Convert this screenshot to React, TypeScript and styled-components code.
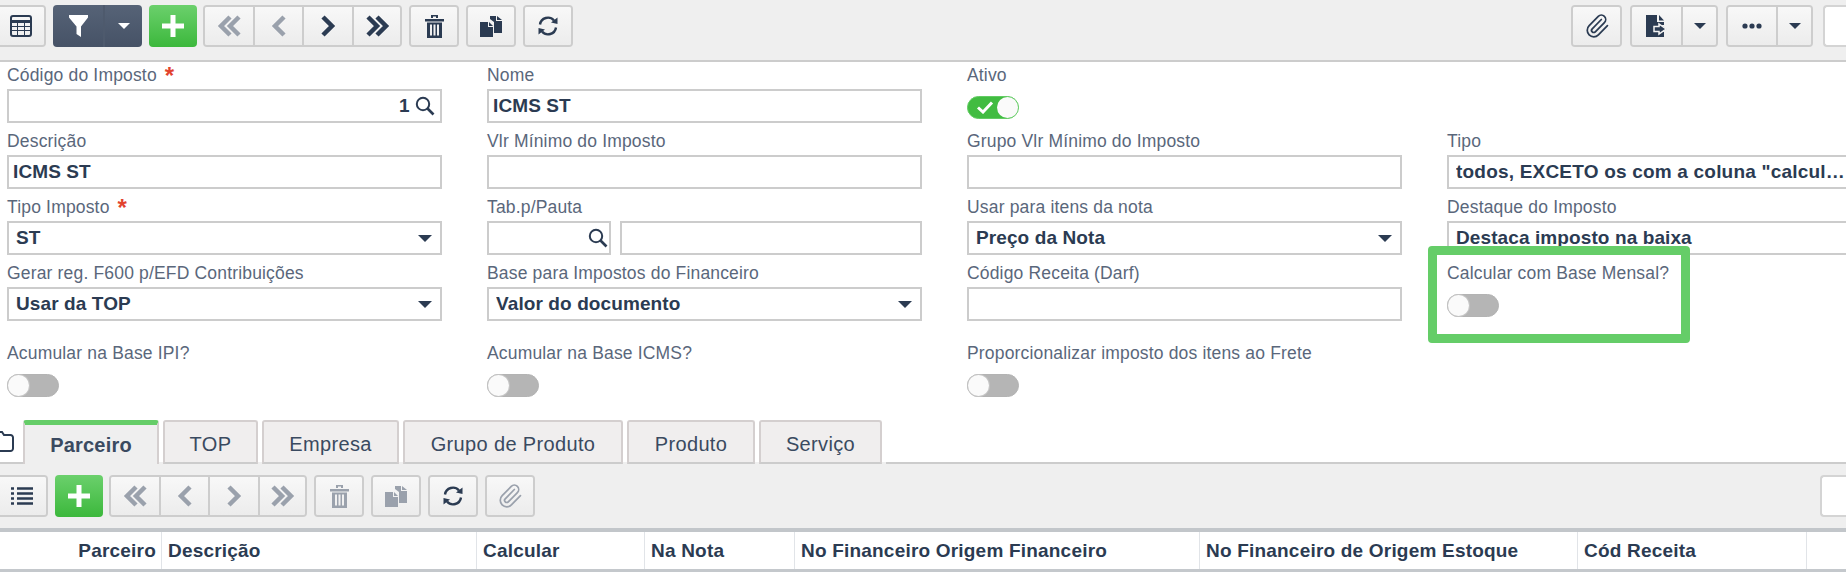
import React from 'react';
import styled, { createGlobalStyle } from 'styled-components';

const GlobalStyle = createGlobalStyle`
  html, body {
    margin: 0;
    padding: 0;
    background: #fff;
    overflow: hidden;
  }
  body {
    font-family: "Liberation Sans", Arial, sans-serif;
    color: #2b3b52;
  }
`;

const NAVY = '#2b3b52';
const MUTED = '#9aa1ac';

const Page = styled.div`
  position: relative;
  width: 1846px;
  height: 577px;
  overflow: hidden;
  background: #fff;
`;

const Toolbar = styled.div<{ $height: number; $top: number; $border: string }>`
  display: flex;
  gap: 7px;
  box-sizing: border-box;
  height: ${p => p.$height}px;
  padding: ${p => p.$top}px 0 0 0;
  background: #efefef;
  border-bottom: ${p => p.$border};
`;

const Spacer = styled.div`
  flex: 1;
`;

const Group = styled.div<{ $shift?: number }>`
  display: flex;
  height: 42px;
  box-sizing: border-box;
  border: 2px solid #cdcdcd;
  border-radius: 4px;
  overflow: hidden;
  flex-shrink: 0;
  margin-left: ${p => p.$shift ?? 0}px;
`;

const Seg = styled.div<{ $w: number }>`
  display: flex;
  align-items: center;
  justify-content: center;
  box-sizing: border-box;
  width: ${p => p.$w}px;
  flex-shrink: 0;
  background: linear-gradient(#f8f8f8, #ececec);
  & + & {
    border-left: 2px solid #cdcdcd;
  }
`;

const DarkGroup = styled(Group)`
  border: none;
  background: linear-gradient(#566377, #465266);
`;

const DarkSeg = styled.div<{ $w: number }>`
  display: flex;
  align-items: center;
  justify-content: center;
  box-sizing: border-box;
  width: ${p => p.$w}px;
  & + & {
    border-left: 2px solid #4e5a6d;
  }
`;

const AddButton = styled.div`
  display: flex;
  align-items: center;
  justify-content: center;
  width: 48px;
  height: 42px;
  flex-shrink: 0;
  border-radius: 4px;
  background: linear-gradient(#6bd06c, #3cb83c);
`;

const WhiteBox = styled.div<{ $w: number; $shift: number }>`
  width: ${p => p.$w}px;
  height: 42px;
  box-sizing: border-box;
  flex-shrink: 0;
  margin-left: ${p => p.$shift}px;
  background: #fff;
  border: 2px solid #d4d4d4;
  border-right: none;
  border-radius: 4px 0 0 4px;
`;

const Form = styled.div`
  display: grid;
  grid-template-columns: repeat(4, 435px);
  column-gap: 45px;
  row-gap: 5px;
  padding: 0 0 0 7px;
`;

const Field = styled.div<{ $top?: number }>`
  display: flex;
  flex-direction: column;
  margin-top: ${p => p.$top ?? 0}px;
`;

const Label = styled.div`
  height: 27px;
  line-height: 27px;
  font-size: 17.5px;
  letter-spacing: 0.17px;
  color: #5a677b;
  white-space: nowrap;
`;

const Star = styled.span`
  color: #e2432e;
  font-size: 24px;
  font-weight: 700;
  line-height: 20px;
  margin-left: 8px;
  vertical-align: -3px;
`;

const Box = styled.div<{ $pad?: number; $right?: boolean }>`
  display: flex;
  align-items: center;
  box-sizing: border-box;
  height: 34px;
  padding: 0 ${p => (p.$right ? 5 : 8)}px 0 ${p => p.$pad ?? 4}px;
  border: 2px solid #cccccc;
  justify-content: ${p => (p.$right ? 'flex-end' : 'flex-start')};
  font-size: 19px;
  font-weight: 700;
  letter-spacing: 0.1px;
  color: ${NAVY};
  white-space: nowrap;
  background: #fff;
`;

const Value = styled.span`
  flex: 1;
  min-width: 0;
  overflow: hidden;
  text-overflow: ellipsis;
`;

const ClippedValue = styled(Value)`
  flex: none;
  width: 390px;
  letter-spacing: 0.2px;
`;

const Pair = styled.div`
  display: flex;
  gap: 9px;
`;

const LookupBox = styled(Box)`
  width: 124px;
  flex-shrink: 0;
  justify-content: flex-end;
  padding-right: 1px;
`;

const GrowBox = styled(Box)`
  flex: 1;
`;

const Caret = styled.div<{ $color?: string; $size?: number }>`
  width: 0;
  height: 0;
  flex-shrink: 0;
  border-left: ${p => p.$size ?? 7}px solid transparent;
  border-right: ${p => p.$size ?? 7}px solid transparent;
  border-top: ${p => p.$size ?? 7}px solid ${p => p.$color ?? NAVY};
`;

const Toggle = styled.div<{ $on?: boolean }>`
  display: flex;
  align-items: center;
  justify-content: ${p => (p.$on ? 'flex-end' : 'flex-start')};
  box-sizing: border-box;
  width: 52px;
  height: 23px;
  margin-top: 7px;
  border-radius: 12px;
  border: 1px solid ${p => (p.$on ? '#62cc63' : '#b3b3b3')};
  background: ${p => (p.$on ? '#41bc41' : '#b5b5b5')};
  position: relative;
`;

const Knob = styled.div<{ $on?: boolean }>`
  width: 21px;
  height: 21px;
  border-radius: 50%;
  background: #fafafa;
  box-shadow: ${p => (p.$on ? 'none' : '0 0 0 1px #c4c4c4')};
`;

const Check = styled.svg`
  position: absolute;
  left: 8px;
  top: 3px;
`;

const Highlight = styled.div`
  position: absolute;
  left: 1428px;
  top: 246px;
  width: 262px;
  height: 97px;
  box-sizing: border-box;
  border: 9px solid #65cd68;
  border-radius: 4px;
`;

const TabRow = styled.div`
  display: flex;
  align-items: flex-end;
  gap: 4px;
  height: 44px;
  margin-top: 23px;
  margin-bottom: -2px;
  position: relative;
`;

const FolderSlot = styled.div`
  display: flex;
  align-items: center;
  width: 23px;
  height: 44px;
  box-sizing: border-box;
  border-bottom: 2px solid #cccccc;
  margin-right: -4px;
`;

const Tab = styled.div<{ $w: number; $active?: boolean }>`
  display: flex;
  align-items: center;
  justify-content: center;
  box-sizing: border-box;
  width: ${p => p.$w}px;
  height: 44px;
  padding-top: ${p => (p.$active ? 2 : 4)}px;
  font-size: 20px;
  letter-spacing: ${p => (p.$active ? 0.2 : 0.35)}px;
  font-weight: ${p => (p.$active ? 700 : 400)};
  color: #3a4a60;
  background: ${p => (p.$active ? '#efefef' : '#f0eeee')};
  border: 2px solid #d4cfcf;
  border-top: ${p => (p.$active ? '5px solid #65cd68' : '2px solid #d4cfcf')};
  border-bottom: ${p => (p.$active ? 'none' : '2px solid #cccccc')};
  border-radius: 3px 3px 0 0;
`;

const Fill = styled.div`
  flex: 1;
  height: 44px;
  box-sizing: border-box;
  border-bottom: 2px solid #cccccc;
`;

const TableHead = styled.div`
  display: flex;
  height: 40px;
  box-sizing: border-box;
  border-bottom: 3px solid #c4c8cc;
`;

const Th = styled.div<{ $w: number; $right?: boolean }>`
  display: flex;
  align-items: center;
  justify-content: ${p => (p.$right ? 'flex-end' : 'flex-start')};
  box-sizing: border-box;
  width: ${p => p.$w}px;
  flex-shrink: 0;
  padding: 0 ${p => (p.$right ? 5 : 0)}px 0 ${p => (p.$right ? 0 : 6)}px;
  border-right: 1px solid #e1e4e8;
  font-size: 19px;
  font-weight: 700;
  letter-spacing: 0.2px;
  color: ${NAVY};
  white-space: nowrap;
`;

const Svg: React.FC<{ w: number; h: number; children: React.ReactNode }> = ({ w, h, children }) => (
  <svg width={w} height={h} viewBox={`0 0 ${w} ${h}`}>
    {children}
  </svg>
);

const TableIcon = () => (
  <Svg w={22} h={22}>
    <rect x="1" y="1" width="20" height="20" rx="2" fill="none" stroke={NAVY} strokeWidth="2" />
    <path d="M1 6.5h20" stroke={NAVY} strokeWidth="3" />
    <path d="M1 11.5h20M1 15.5h20M7.5 7v14M14.5 7v14" stroke={NAVY} strokeWidth="1" />
  </Svg>
);

const ListIcon = () => (
  <Svg w={22} h={20}>
    <path d="M0 2.5h3M6 2.5h16M0 7.5h3M6 7.5h16M0 12.5h3M6 12.5h16M0 17.5h3M6 17.5h16" stroke={NAVY} strokeWidth="2.6" />
  </Svg>
);

const FunnelIcon = () => (
  <Svg w={19} h={22}>
    <path d="M0 0H19V2.5L12 11.5V22L7.5 19V11.5L0 2.5Z" fill="#fff" />
  </Svg>
);

const PlusIcon = () => (
  <Svg w={22} h={22}>
    <path d="M8.5 0H13.5V8.5H22V13.5H13.5V22H8.5V13.5H0V8.5H8.5Z" fill="#fff" />
  </Svg>
);

const Chevron: React.FC<{ dir: 'left' | 'right'; double?: boolean; color: string }> = ({ dir, double, color }) => {
  const one = dir === 'left' ? 'M13 2L4 11L13 20' : 'M3 2L12 11L3 20';
  const two = dir === 'left' ? 'M22 2L13 11L22 20' : 'M12 2L21 11L12 20';
  return (
    <Svg w={double ? 25 : 16} h={22}>
      <path d={one} fill="none" stroke={color} strokeWidth="4.5" />
      {double && <path d={two} fill="none" stroke={color} strokeWidth="4.5" />}
    </Svg>
  );
};

const TrashIcon: React.FC<{ color: string }> = ({ color }) => (
  <Svg w={19} h={24}>
    <path d="M0 5H19V7.5H0ZM6 4V1H13V4H11V2.5H8V4Z" fill={color} />
    <path d="M2 8.5H17V24H2ZM5 10.5V21.5H7V10.5ZM8.5 10.5V21.5H10.5V10.5ZM12 10.5V21.5H14V10.5Z" fill={color} fillRule="evenodd" />
  </Svg>
);

const CopyIcon: React.FC<{ color: string }> = ({ color }) => (
  <Svg w={22} h={21}>
    <path d="M10 0H16V5H22V17H14V6L10 3Z" fill={color} />
    <path d="M17 0L22 4H17Z" fill={color} />
    <path d="M0 6H8V11H13V21H0Z" fill={color} />
    <path d="M9 6L13 10H9Z" fill={color} />
  </Svg>
);

const RefreshIcon = () => (
  <Svg w={22} h={22}>
    <path d="M3 9.5A8 8 0 0 1 17 5.5" fill="none" stroke={NAVY} strokeWidth="2.4" />
    <path d="M19 12.5A8 8 0 0 1 5 16.5" fill="none" stroke={NAVY} strokeWidth="2.4" />
    <path d="M14 7.5L20.5 9V2.5ZM8 14.5L1.5 13V19.5Z" fill={NAVY} />
  </Svg>
);

const ClipIcon: React.FC<{ color: string }> = ({ color }) => (
  <svg width="26" height="26" viewBox="0 0 24 24" fill="none" stroke={color} strokeWidth="1.6" strokeLinecap="round">
    <path d="m16 6-8.414 8.586a2 2 0 0 0 2.829 2.828l8.414-8.586a4 4 0 1 0-5.657-5.657l-8.379 8.551a6 6 0 1 0 8.485 8.485l8.379-8.551" />
  </svg>
);

const ExportIcon = () => (
  <Svg w={21} h={22}>
    <path d="M0 0H11V7H18V10H12V7.5L20.5 14L12 20V17H18V22H0Z" fill={NAVY} />
    <path d="M13 0L18 5.5H13Z" fill={NAVY} />
    <path d="M8 11.5H13V9L20 14L13 19V16.5H8Z" fill={NAVY} stroke="#f3f3f3" strokeWidth="1.5" />
  </Svg>
);

const DotsIcon = () => (
  <Svg w={20} h={6}>
    <circle cx="3" cy="3" r="2.6" fill={NAVY} />
    <circle cx="10" cy="3" r="2.6" fill={NAVY} />
    <circle cx="17" cy="3" r="2.6" fill={NAVY} />
  </Svg>
);

const SearchIcon = () => (
  <Svg w={20} h={20}>
    <circle cx="8" cy="8" r="6.2" fill="none" stroke={NAVY} strokeWidth="2" />
    <path d="M12.5 12.5L18.5 18.5" stroke={NAVY} strokeWidth="2.6" />
  </Svg>
);

const FolderIcon = () => (
  <Svg w={14} h={21}>
    <path d="M-6 20H10.5A2.5 2.5 0 0 0 13 17.5V6.5A2.5 2.5 0 0 0 10.5 4H4L2 1H-6" fill="none" stroke={NAVY} strokeWidth="2" />
  </Svg>
);

const TextField: React.FC<{ label: string; value?: string; required?: boolean; pad?: number }> = ({ label, value, required, pad }) => (
  <Field>
    <Label>
      {label}
      {required && <Star>*</Star>}
    </Label>
    <Box $pad={pad}>{value}</Box>
  </Field>
);

const SelectField: React.FC<{ label: string; value: string; required?: boolean }> = ({ label, value, required }) => (
  <Field>
    <Label>
      {label}
      {required && <Star>*</Star>}
    </Label>
    <Box $pad={7}>
      <Value>{value}</Value>
      <Caret />
    </Box>
  </Field>
);

const ToggleField: React.FC<{ label: string; on?: boolean; top?: number }> = ({ label, on, top }) => (
  <Field $top={top}>
    <Label>{label}</Label>
    <Toggle $on={on}>
      {on && (
        <Check width="18" height="14" viewBox="0 0 18 14">
          <path d="M2 7.5L7 12L16 2.5" fill="none" stroke="#fff" strokeWidth="3" />
        </Check>
      )}
      <Knob $on={on} />
    </Toggle>
  </Field>
);

const tabs = [
  { label: 'TOP', w: 95 },
  { label: 'Empresa', w: 137 },
  { label: 'Grupo de Produto', w: 220 },
  { label: 'Produto', w: 128 },
  { label: 'Serviço', w: 123 },
];

const columns = [
  { label: 'Descrição', w: 315 },
  { label: 'Calcular', w: 168 },
  { label: 'Na Nota', w: 150 },
  { label: 'No Financeiro Origem Financeiro', w: 405 },
  { label: 'No Financeiro de Origem Estoque', w: 378 },
  { label: 'Cód Receita', w: 229 },
];

const App: React.FC = () => {
  return (
    <Page>
      <GlobalStyle />

      <Toolbar $height={62} $top={5} $border="2px solid #cccccc">
        <Group $shift={-4}>
          <Seg $w={46}><TableIcon /></Seg>
        </Group>
        <DarkGroup>
          <DarkSeg $w={50}><FunnelIcon /></DarkSeg>
          <DarkSeg $w={39}><Caret $color="#fff" $size={6} /></DarkSeg>
        </DarkGroup>
        <AddButton><PlusIcon /></AddButton>
        <Group $shift={-1}>
          <Seg $w={48}><Chevron dir="left" double color={MUTED} /></Seg>
          <Seg $w={49}><Chevron dir="left" color={MUTED} /></Seg>
          <Seg $w={50}><Chevron dir="right" color={NAVY} /></Seg>
          <Seg $w={48}><Chevron dir="right" double color={NAVY} /></Seg>
        </Group>
        <Group><Seg $w={46}><TrashIcon color={NAVY} /></Seg></Group>
        <Group><Seg $w={46}><CopyIcon color={NAVY} /></Seg></Group>
        <Group><Seg $w={46}><RefreshIcon /></Seg></Group>
        <Spacer />
        <Group><Seg $w={47}><ClipIcon color={NAVY} /></Seg></Group>
        <Group $shift={1}>
          <Seg $w={49}><ExportIcon /></Seg>
          <Seg $w={35}><Caret $size={6} /></Seg>
        </Group>
        <Group $shift={1}>
          <Seg $w={48}><DotsIcon /></Seg>
          <Seg $w={35}><Caret $size={6} /></Seg>
        </Group>
        <WhiteBox $w={23} $shift={3} />
      </Toolbar>

      <Form>
        <Field>
          <Label>Código do Imposto<Star>*</Star></Label>
          <Box $right>
            1&nbsp;<SearchIcon />
          </Box>
        </Field>
        <TextField label="Nome" value="ICMS ST" />
        <ToggleField label="Ativo" on />
        <div />

        <TextField label="Descrição" value="ICMS ST" />
        <TextField label="Vlr Mínimo do Imposto" />
        <TextField label="Grupo Vlr Mínimo do Imposto" />
        <Field>
          <Label>Tipo</Label>
          <Box $pad={7}>
            <ClippedValue>todos, EXCETO os com a coluna "calcular o imposto"</ClippedValue>
          </Box>
        </Field>

        <SelectField label="Tipo Imposto" value="ST" required />
        <Field>
          <Label>Tab.p/Pauta</Label>
          <Pair>
            <LookupBox><SearchIcon /></LookupBox>
            <GrowBox />
          </Pair>
        </Field>
        <SelectField label="Usar para itens da nota" value="Preço da Nota" />
        <SelectField label="Destaque do Imposto" value="Destaca imposto na baixa" />

        <SelectField label="Gerar reg. F600 p/EFD Contribuições" value="Usar da TOP" />
        <SelectField label="Base para Impostos do Financeiro" value="Valor do documento" />
        <TextField label="Código Receita (Darf)" />
        <ToggleField label="Calcular com Base Mensal?" />

        <ToggleField label="Acumular na Base IPI?" top={14} />
        <ToggleField label="Acumular na Base ICMS?" top={14} />
        <ToggleField label="Proporcionalizar imposto dos itens ao Frete" top={14} />
      </Form>

      <TabRow>
        <FolderSlot><FolderIcon /></FolderSlot>
        <Tab $w={136} $active>Parceiro</Tab>
        {tabs.map(t => (
          <Tab key={t.label} $w={t.w}>{t.label}</Tab>
        ))}
        <Fill />
      </TabRow>

      <Toolbar $height={70} $top={13} $border="4px solid #c2c6ca">
        <Group $shift={-4}>
          <Seg $w={48}><ListIcon /></Seg>
        </Group>
        <AddButton><PlusIcon /></AddButton>
        <Group $shift={-1}>
          <Seg $w={48}><Chevron dir="left" double color={MUTED} /></Seg>
          <Seg $w={49}><Chevron dir="left" color={MUTED} /></Seg>
          <Seg $w={50}><Chevron dir="right" color={MUTED} /></Seg>
          <Seg $w={47}><Chevron dir="right" double color={MUTED} /></Seg>
        </Group>
        <Group><Seg $w={46}><TrashIcon color={MUTED} /></Seg></Group>
        <Group><Seg $w={46}><CopyIcon color={MUTED} /></Seg></Group>
        <Group><Seg $w={46}><RefreshIcon /></Seg></Group>
        <Group><Seg $w={46}><ClipIcon color={MUTED} /></Seg></Group>
        <Spacer />
        <WhiteBox $w={26} $shift={0} />
      </Toolbar>

      <TableHead>
        <Th $w={162} $right>Parceiro</Th>
        {columns.map(c => (
          <Th key={c.label} $w={c.w}>{c.label}</Th>
        ))}
      </TableHead>

      <Highlight />
    </Page>
  );
};

export default App;
